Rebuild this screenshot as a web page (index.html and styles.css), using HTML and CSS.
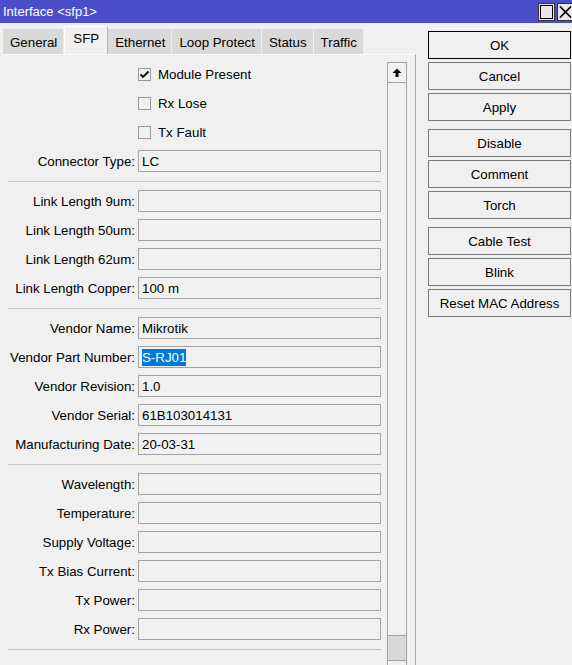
FILE: index.html
```html
<!DOCTYPE html>
<html lang="en">
<head>
    <meta charset="UTF-8">
    <title>Interface &lt;sfp1&gt;</title>
    <link rel="stylesheet" href="styles.css">
</head>
<body>

    <div class="window">

        <header class="title-bar">
            <span class="title-text">Interface &lt;sfp1&gt;</span>
            <span class="title-btn title-max"><span class="max-square"></span></span>
            <span class="title-btn title-close">
                <svg width="16" height="16" viewBox="0 0 16 16"><path d="M2 2 L14 14 M14 2 L2 14" stroke="#000" stroke-width="1.6" fill="none"/></svg>
            </span>
        </header>

        <div class="window-body">

            <section class="left-col">
                <nav class="tabs">
                    <div class="tab">General</div>
                    <div class="tab active">SFP</div>
                    <div class="tab">Ethernet</div>
                    <div class="tab">Loop Protect</div>
                    <div class="tab">Status</div>
                    <div class="tab">Traffic</div>
                </nav>

                <div class="panel">
                    <div class="form">
                        <div class="row check-row">
                            <span class="checkbox">
                                <svg width="11" height="11" viewBox="0 0 11 11"><path d="M1.5 5.5 L4 8 L9.5 2.5" stroke="#000" stroke-width="1.8" fill="none"/></svg>
                            </span>
                            <span class="check-label">Module Present</span>
                        </div>
                        <div class="row check-row">
                            <span class="checkbox"></span>
                            <span class="check-label">Rx Lose</span>
                        </div>
                        <div class="row check-row">
                            <span class="checkbox"></span>
                            <span class="check-label">Tx Fault</span>
                        </div>
                        <div class="row">
                            <label class="label">Connector Type:</label>
                            <div class="field">LC</div>
                        </div>

                        <div class="separator"></div>

                        <div class="row">
                            <label class="label">Link Length 9um:</label>
                            <div class="field"></div>
                        </div>
                        <div class="row">
                            <label class="label">Link Length 50um:</label>
                            <div class="field"></div>
                        </div>
                        <div class="row">
                            <label class="label">Link Length 62um:</label>
                            <div class="field"></div>
                        </div>
                        <div class="row">
                            <label class="label">Link Length Copper:</label>
                            <div class="field">100 m</div>
                        </div>

                        <div class="separator"></div>

                        <div class="row">
                            <label class="label">Vendor Name:</label>
                            <div class="field">Mikrotik</div>
                        </div>
                        <div class="row">
                            <label class="label">Vendor Part Number:</label>
                            <div class="field"><span class="selected-text">S-RJ01</span></div>
                        </div>
                        <div class="row">
                            <label class="label">Vendor Revision:</label>
                            <div class="field">1.0</div>
                        </div>
                        <div class="row">
                            <label class="label">Vendor Serial:</label>
                            <div class="field">61B103014131</div>
                        </div>
                        <div class="row">
                            <label class="label">Manufacturing Date:</label>
                            <div class="field">20-03-31</div>
                        </div>

                        <div class="separator"></div>

                        <div class="row">
                            <label class="label">Wavelength:</label>
                            <div class="field"></div>
                        </div>
                        <div class="row">
                            <label class="label">Temperature:</label>
                            <div class="field"></div>
                        </div>
                        <div class="row">
                            <label class="label">Supply Voltage:</label>
                            <div class="field"></div>
                        </div>
                        <div class="row">
                            <label class="label">Tx Bias Current:</label>
                            <div class="field"></div>
                        </div>
                        <div class="row">
                            <label class="label">Tx Power:</label>
                            <div class="field"></div>
                        </div>
                        <div class="row">
                            <label class="label">Rx Power:</label>
                            <div class="field"></div>
                        </div>

                        <div class="separator"></div>
                    </div>

                    <div class="scrollbar">
                        <div class="scroll-btn">
                            <svg width="10" height="10" viewBox="0 0 10 10"><path d="M5 0.5 L9.5 5 L6.5 5 L6.5 9 L3.5 9 L3.5 5 L0.5 5 Z" fill="#000"/></svg>
                        </div>
                        <div class="scroll-track"></div>
                        <div class="scroll-thumb"></div>
                        <div class="scroll-btn"></div>
                    </div>
                </div>
            </section>

            <aside class="right-col">
                <div class="btn-group">
                    <button class="btn btn-default">OK</button>
                    <button class="btn">Cancel</button>
                    <button class="btn">Apply</button>
                </div>
                <div class="btn-group">
                    <button class="btn">Disable</button>
                    <button class="btn">Comment</button>
                    <button class="btn">Torch</button>
                </div>
                <div class="btn-group">
                    <button class="btn">Cable Test</button>
                    <button class="btn">Blink</button>
                    <button class="btn">Reset MAC Address</button>
                </div>
            </aside>

        </div>
    </div>

</body>
</html>
```

FILE: styles.css
```css
/* Winbox style dialog */
:root {
    --bg: #f0f0f0;
    --title-bg: #4b4ec8;
    --tab-bg: #d9d9d9;
    --field-border: #a3a3a3;
    --btn-border: #7a7a7a;
    --separator: #c6c6c6;
    --select-bg: #0078d7;
}

* {
    margin: 0;
    padding: 0;
    box-sizing: border-box;
}

html, body {
    width: 100%;
    height: 100%;
    overflow: hidden;
}

body {
    background-color: var(--bg);
    font-family: 'Liberation Sans', Arial, sans-serif;
    font-size: 13.3px;
    color: #000;
}

.window {
    display: flex;
    flex-direction: column;
    height: 665px;
}

/* Title bar */
.title-bar {
    height: 23px;
    flex-shrink: 0;
    display: flex;
    align-items: center;
    background-color: var(--title-bg);
    color: #fff;
    padding-left: 3px;
    overflow: hidden;
    font-size: 13px;
}

.title-text {
    flex-grow: 1;
    margin-top: -1px;
}

.title-btn {
    width: 17px;
    height: 18px;
    flex-shrink: 0;
    display: flex;
    align-items: center;
    justify-content: center;
    background-color: #e8e8e8;
    border: 1px solid #333;
    margin-left: 2px;
}

.max-square {
    width: 13px;
    height: 14px;
    border: 1px solid #000;
}

.title-close {
    margin-right: -2px;
}

.window-body {
    flex-grow: 1;
    display: flex;
    min-height: 0;
}

/* Left column: tabs and form panel */
.left-col {
    width: 416px;
    flex-shrink: 0;
    display: flex;
    flex-direction: column;
}

.tabs {
    height: 31px;
    flex-shrink: 0;
    display: flex;
    align-items: flex-end;
    padding-left: 3px;
}

.tab {
    height: 25px;
    padding: 1px 6px 0 7px;
    display: flex;
    align-items: center;
    background-color: var(--tab-bg);
    border-right: 1px solid #ececec;
}

.tab.active {
    height: 28px;
    background-color: var(--bg);
    border-top: 1px solid #fff;
    border-left: 1px solid #fff;
    border-right: 1px solid #b5b5b5;
    padding: 0 8px 4px 8px;
}

.panel {
    flex-grow: 1;
    display: flex;
    align-items: flex-start;
    margin-left: 3px;
    border-top: 1px solid #fbfbfb;
    border-right: 1px solid #a9a9a9;
    overflow: hidden;
}

.form {
    width: 378px;
    padding-top: 8px;
    flex-shrink: 0;
    display: flex;
    flex-direction: column;
}

.row {
    height: 22px;
    display: flex;
    align-items: center;
    margin-bottom: 7px;
}

.label {
    width: 135px;
    flex-shrink: 0;
    padding-right: 3px;
    text-align: right;
    white-space: nowrap;
}

.field {
    width: 243px;
    height: 22px;
    border: 1px solid var(--field-border);
    padding-left: 3px;
    display: flex;
    align-items: center;
    white-space: nowrap;
}

.selected-text {
    background-color: var(--select-bg);
    color: #fff;
    line-height: 17px;
}

.check-row {
    padding-left: 135px;
}

.checkbox {
    width: 13px;
    height: 13px;
    border: 1px solid #9a9a9a;
    display: flex;
    align-items: center;
    justify-content: center;
    margin-right: 7px;
}

.separator {
    height: 1px;
    flex-shrink: 0;
    margin: 2px 0 8px 5px;
    background-color: var(--separator);
}

/* Vertical scrollbar */
.scrollbar {
    width: 20px;
    margin-left: 6px;
    margin-top: 7px;
    flex-shrink: 0;
    display: flex;
    flex-direction: column;
    border-left: 1px solid #a3a3a3;
    border-right: 1px solid #a3a3a3;
}

.scroll-btn {
    height: 21px;
    flex-shrink: 0;
    display: flex;
    align-items: center;
    justify-content: center;
    border-top: 1px solid #a3a3a3;
    border-bottom: 1px solid #a3a3a3;
    background-color: var(--bg);
}

.scroll-track {
    height: 552px;
    flex-shrink: 0;
}

.scroll-thumb {
    height: 25px;
    flex-shrink: 0;
    background-color: #d9d9d9;
    border-top: 1px solid #a3a3a3;
}

/* Right column: action buttons */
.right-col {
    flex-grow: 1;
    padding: 8px 0 0 12px;
    display: flex;
    flex-direction: column;
    gap: 8px;
}

.btn-group {
    display: flex;
    flex-direction: column;
    gap: 3px;
}

.btn {
    width: 143px;
    height: 28px;
    background-color: var(--bg);
    border: 1px solid var(--btn-border);
    font-family: inherit;
    font-size: 13.3px;
    color: #000;
}

.btn-default {
    border: 1px solid #000;
}
```
